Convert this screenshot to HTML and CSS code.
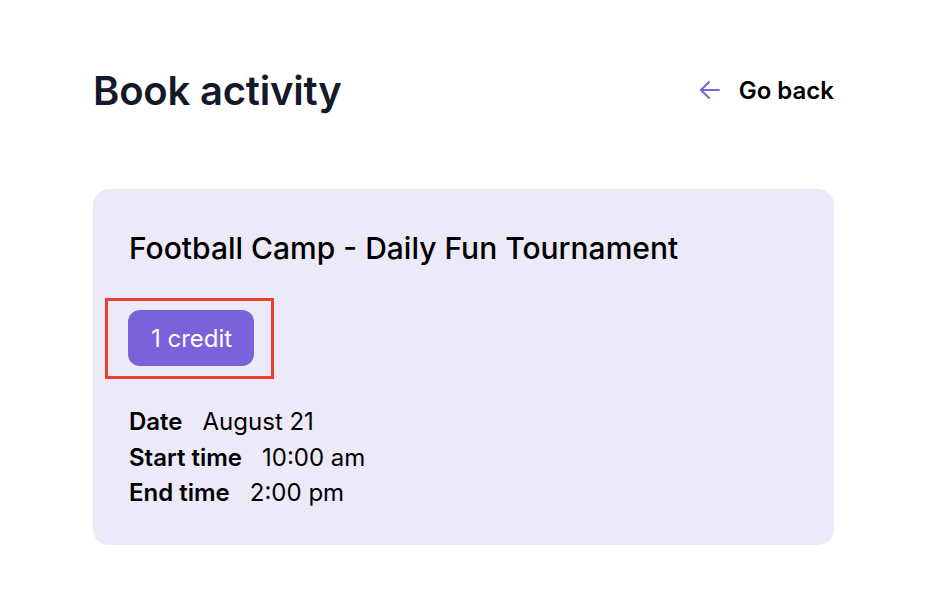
FILE: index.html
```html
<!DOCTYPE html>
<html lang="en">
<head>
<meta charset="utf-8">
<link rel="stylesheet" href="styles.css">
</head>
<body>
<main class="page">
  <header class="header">
    <h1 class="title">Book activity</h1>
    <a class="back" href="#">
      <svg class="back-icon" width="22" height="22" viewBox="0 0 22 22" fill="none" stroke="currentColor" stroke-width="2" stroke-linecap="round" stroke-linejoin="round"><path d="M20 11H2"/><path d="M10 3l-8 8 8 8"/></svg>
      <span>Go back</span>
    </a>
  </header>
  <section class="card">
    <h2 class="card-title">Football Camp - Daily Fun Tournament</h2>
    <div class="badge-wrap">
      <span class="badge">1 credit</span>
    </div>
    <dl class="details">
      <div class="row"><dt>Date</dt><dd>August 21</dd></div>
      <div class="row"><dt>Start time</dt><dd>10:00 am</dd></div>
      <div class="row"><dt>End time</dt><dd>2:00 pm</dd></div>
    </dl>
  </section>
</main>
</body>
</html>
```
FILE: styles.css
```css
* { box-sizing: border-box; }
html, body { margin: 0; padding: 0; background: #ffffff; }
body { font-family: Inter, "Noto Sans", sans-serif; color: #000; }
.page { width: 741px; margin-left: 93px; padding-top: 64px; }
.header { display: flex; justify-content: space-between; align-items: center; height: 52px; }
.title { margin: 0; font-size: 40px; font-weight: 600; color: #141a2a; letter-spacing: -0.2px; }
.back { display: flex; align-items: center; gap: 18px; text-decoration: none; color: #000; font-size: 24px; font-weight: 600; }
.back-icon { color: #7b63d9; }
.card { margin-top: 73px; background: #ece9f8; border-radius: 16px; padding: 39px 36px 40px; height: 356px; }
.card-title { margin: 0; font-size: 30px; font-weight: 500; line-height: 40px; }
.badge-wrap { margin-top: 30px; margin-left: -24px; display: inline-block; border: 3px solid #e8412c; padding: 9px 17px 10px 20px; }
.badge { display: inline-flex; align-items: center; height: 56px; padding: 0 22px 0 23px; background: #7a63da; color: #fff; border-radius: 12px; font-size: 24px; font-weight: 400; }
.details { margin: 25px 0 0; font-size: 24px; line-height: 35.5px; }
.row { display: flex; gap: 20px; }
dt { font-weight: 600; }
dd { margin: 0; }
```
